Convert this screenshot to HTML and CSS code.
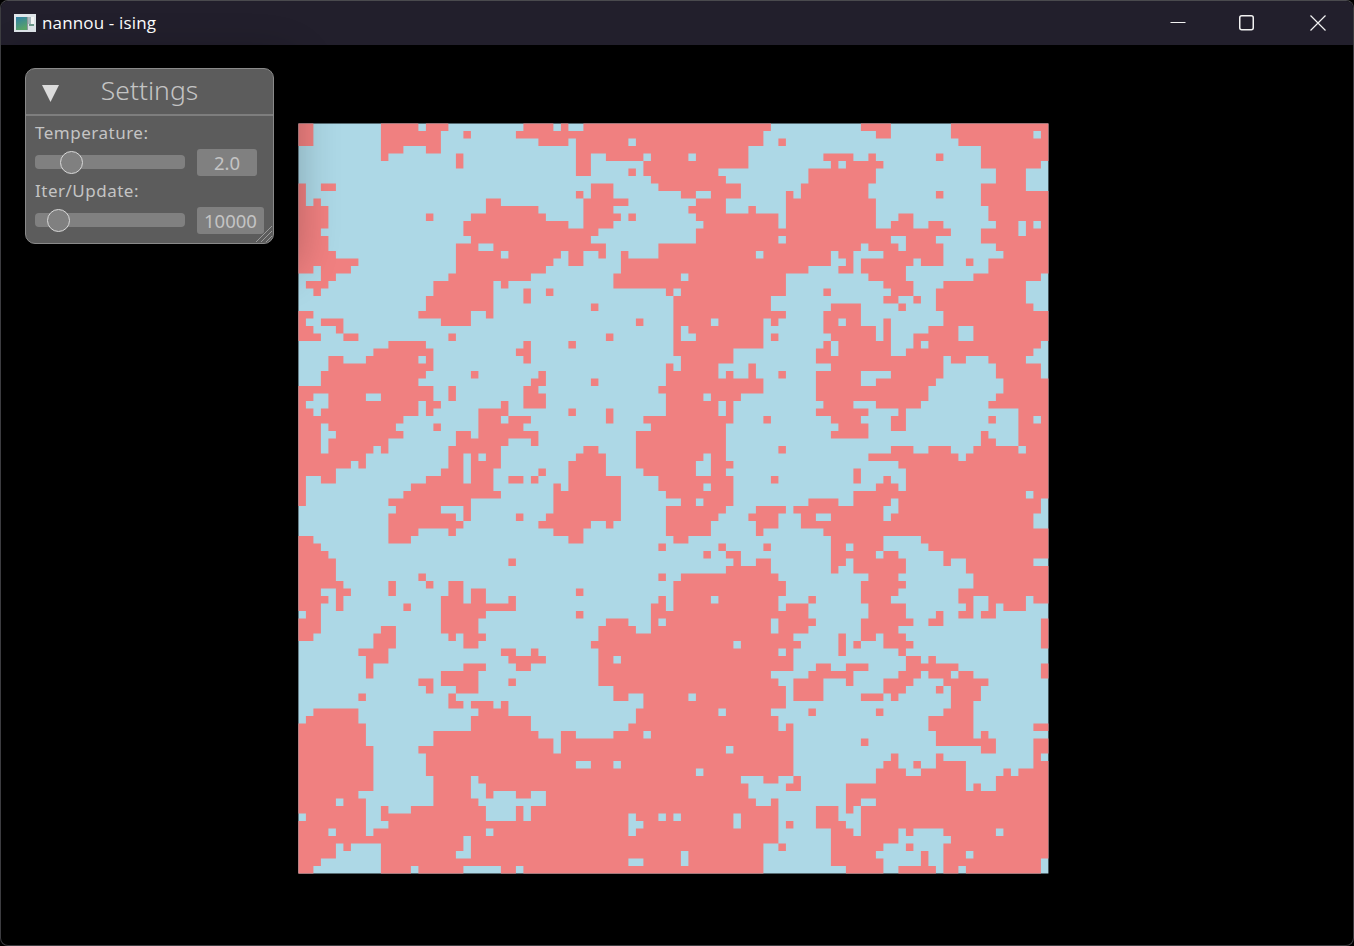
FILE: index.html
```html
<!DOCTYPE html>
<html lang="en">
  <head>
    <meta charset="UTF-8" />
    <title>nannou - ising</title>
    <link rel="stylesheet" href="styles.css">
  </head>
  <body>
    <div class="window">
      <header class="titlebar">
        <svg class="app-icon" width="22" height="18" viewBox="0 0 22 18">
          <defs>
            <linearGradient id="iconFill" x1="0" y1="0" x2="0.4" y2="1">
              <stop offset="0" stop-color="#2f7fa8" />
              <stop offset="1" stop-color="#5aa56a" />
            </linearGradient>
          </defs>
          <rect width="22" height="18" fill="#dfe6ea" />
          <rect x="2" y="3" width="11" height="13" fill="url(#iconFill)" />
          <rect x="13" y="3" width="1" height="13" fill="#8f9a9e" />
          <rect x="17" y="3" width="3" height="7" fill="#f4f6f6" />
          <rect x="14" y="3" width="3" height="7" fill="#a9b9bd" />
          <rect x="15" y="10" width="5" height="2" fill="#6d9a8a" />
        </svg>
        <span class="title">nannou - ising</span>
        <div class="controls">
          <button class="ctl">
            <svg width="16" height="16" viewBox="0 0 16 16"><path d="M0.5 7.5H15.5" /></svg>
          </button>
          <button class="ctl max">
            <svg width="16" height="16" viewBox="0 0 16 16"><rect x="0.75" y="0.75" width="13.5" height="14" rx="2" /></svg>
          </button>
          <button class="ctl">
            <svg width="16" height="16" viewBox="0 0 16 16"><path d="M0.5 0.5L15.5 15.5M15.5 0.5L0.5 15.5" /></svg>
          </button>
        </div>
      </header>

      <main class="content">
        <svg id="lattice" class="lattice" width="751" height="751" viewBox="0 0 751 751"></svg>

        <section class="panel">
          <div class="panel-head">
            <svg class="collapse" width="17" height="17" viewBox="0 0 17 17"><path d="M0 0H17L8.5 17Z" /></svg>
            <span class="panel-title">Settings</span>
          </div>
          <div class="panel-body">
            <div class="label">Temperature:</div>
            <div class="row">
              <div class="track"><span class="thumb" style="left: 24%"></span></div>
              <div class="value">2.0</div>
            </div>
            <div class="label">Iter/Update:</div>
            <div class="row">
              <div class="track"><span class="thumb" style="left: 15.5%"></span></div>
              <div class="value wide">10000</div>
            </div>
          </div>
          <svg class="grip" width="18" height="18" viewBox="0 0 18 18">
            <path d="M1 17L17 1M6 17L17 6M11 17L17 11" />
          </svg>
        </section>
      </main>
    </div>
    <script src="script.js"></script>
  </body>
</html>
```

FILE: styles.css
```css
* {
  box-sizing: border-box;
}
html,
body {
  margin: 0;
  height: 100%;
  background-color: #000000;
}
.window {
  height: 946px;
  display: flex;
  flex-direction: column;
  border: 1px solid #3c3c40;
  border-top-color: #4a4a4e;
  border-radius: 8px;
  overflow: hidden;
  background-color: #000000;
}
.titlebar {
  height: 44px;
  display: flex;
  align-items: center;
  background-color: #221f2c;
  color: #ffffff;
  padding-left: 13px;
}
.app-icon {
  margin-right: 6px;
  margin-top: -1px;
}
.title {
  font-family: "Open Sans", sans-serif;
  font-size: 17px;
  letter-spacing: 0.15px;
  margin-top: -2px;
}
.controls {
  margin-left: auto;
  display: flex;
}
.ctl {
  width: 70px;
  height: 44px;
  display: flex;
  align-items: center;
  justify-content: center;
  padding: 0;
  border: none;
  background: none;
}
.ctl svg {
  fill: none;
  stroke: #f2f2f2;
  stroke-width: 1.2;
}
.max svg {
  margin-right: 3px;
  stroke-width: 1.5;
}
.content {
  flex: 1;
  position: relative;
  padding: 78px 0 0 297px;
}
.lattice {
  display: block;
}
.panel {
  position: absolute;
  left: 24px;
  top: 23px;
  width: 249px;
  height: 176px;
  background-color: #5c5c5c;
  border: 1px solid #8a8a8a;
  border-radius: 10px;
  box-shadow: 4px 8px 40px 22px rgba(0, 0, 0, 0.24);
  font-family: "Noto Sans", sans-serif;
  color: #c4c4c4;
}
.panel-head {
  height: 47px;
  position: relative;
  display: flex;
  align-items: center;
  justify-content: center;
  border-bottom: 2px solid #7e7e7e;
}
.collapse {
  position: absolute;
  left: 16px;
  top: 16px;
  fill: #dcdcdc;
}
.panel-title {
  font-size: 26.5px;
  font-weight: 300;
  line-height: 44px;
  margin-top: -4px;
}
.panel-body {
  padding: 7px 9px 0 9px;
}
.label {
  font-size: 17px;
  letter-spacing: 0.5px;
  line-height: 20px;
  height: 20px;
}
.row {
  display: flex;
  align-items: center;
  gap: 12px;
  height: 38px;
}
.track {
  position: relative;
  width: 150px;
  height: 14px;
  border-radius: 4px;
  background-color: #808080;
}
.thumb {
  position: absolute;
  top: 50%;
  width: 23px;
  height: 23px;
  margin: -11.5px 0 0 -11.5px;
  border: 1.5px solid #d8d8d8;
  border-radius: 50%;
  background-color: #808080;
}
.value {
  width: 60px;
  height: 27px;
  border-radius: 3px;
  background-color: #808080;
  font-size: 18.5px;
  line-height: 27px;
  text-align: center;
}
.wide {
  width: 67px;
}
.grip {
  position: absolute;
  right: 0;
  bottom: 0;
  fill: none;
  stroke: #9a9a9a;
  stroke-width: 1;
}
```

FILE: script.js
```js
// red runs per row, "start-end" in lattice cells, the rest of the row is blue
const rows = [
  "0-2 11-16 17-20 30-34 35-36 38-63 75-79 87-100",
  "0-2 11-19 22-23 29-62 77-79 87-98 99-100",
  "0-2 11-19 32-36 37-44 45-62 64-65 88-100",
  "11-14 17-19 37-60 91-100",
  "11-12 21-22 37-39 41-46 47-52 53-60 70-74 76-77 85-86 91-100",
  "21-22 37-39 46-60 71-72 73-78 91-99",
  "37-39 44-45 46-56 68-77 93-97",
  "47-57 68-77 93-97",
  "0-1 3-5 39-42 48-59 67-76 91-97",
  "0-1 37-38 39-42 51-53 55-59 65-66 67-76 85-86 91-100",
  "0-1 2-3 25-27 38-44 53-57 65-77 91-100",
  "0-4 25-32 38-42 52-57 60-61 65-77 92-100",
  "0-4 17-18 23-33 38-43 44-45 53-64 65-77 80-82 92-100",
  "0-4 22-36 38-42 54-64 65-77 79-82 84-86 93-96 97-98 99-100",
  "0-3 22-40 53-87 91-96 97-100",
  "0-4 23-39 53-64 65-79 81-85 91-100",
  "0-4 21-24 26-41 48-75 76-80 81-86 93-100",
  "0-5 21-27 28-35 36-38 40-41 43-44 48-61 62-71 72-74 78-86 94-100",
  "0-8 21-34 36-38 43-71 73-74 75-82 83-86 89-90 92-100",
  "0-2 3-7 21-33 43-68 72-74 75-81 92-100",
  "3-5 20-31 42-51 52-65 76-81 90-99",
  "1-4 18-26 27-28 42-65 78-82 86-97",
  "2-3 18-26 30-31 33-34 49-50 51-65 70-71 79-82 85-97",
  "17-26 30-31 50-63 78-80 82-83 85-97",
  "17-26 39-40 50-63 71-75 80-81 85-98",
  "0-2 16-23 25-26 50-65 70-75 86-100",
  "0-1 3-6 19-23 45-46 50-55 56-62 63-64 70-72 73-75 78-79 86-100",
  "0-2 5-6 50-51 52-62 70-77 78-79 84-88 90-100",
  "0-3 6-8 20-21 41-42 50-51 53-62 63-64 71-77 78-79 82-88 90-100",
  "12-17 30-31 36-37 50-62 70-71 72-79 82-83 84-99",
  "10-18 29-31 50-58 69-71 72-79 81-98",
  "4-6 9-16 17-18 30-31 51-58 69-86 87-89 92-97",
  "4-18 49-50 51-56 60-61 71-86 93-99",
  "3-17 23-24 32-33 49-56 57-58 60-61 64-65 69-75 79-86 93-99",
  "3-16 31-33 39-40 49-62 69-75 77-85 94-100",
  "0-18 20-21 30-32 48-62 69-84 94-100",
  "0-2 4-9 11-18 20-21 30-33 49-54 55-59 69-84 93-100",
  "0-1 4-16 17-19 27-28 30-33 49-56 57-58 70-74 77-83 92-100",
  "0-2 3-16 17-18 24-28 36-37 41-42 49-56 57-58 69-76 80-81 96-100",
  "0-14 24-27 28-31 41-42 46-58 62-63 71-75 79-81 92-93 96-98 99-100",
  "0-3 4-13 18-19 24-30 47-57 72-76 79-81 96-100",
  "0-3 5-14 21-23 24-32 45-57 71-76 91-92 96-100",
  "0-3 4-12 21-28 31-32 45-57 91-93 96-100",
  "0-3 4-10 11-12 20-27 38-40 45-57 64-65 79-82 84-87 90-96 97-100",
  "0-9 20-22 23-24 25-27 37-41 45-54 55-57 76-88 89-100",
  "0-7 8-9 20-22 23-27 36-41 45-53 55-58 80-100",
  "0-5 19-22 23-26 32-33 36-41 46-53 55-57 74-75 81-100",
  "0-1 3-5 17-22 23-26 28-30 31-32 36-43 48-58 63-64 74-75 78-79 81-100",
  "0-1 15-26 34-35 36-43 48-54 55-58 77-80 81-100",
  "0-1 14-27 34-43 49-58 74-97 98-100",
  "0-1 12-23 34-43 51-53 54-58 68-72 74-79 80-99",
  "13-19 22-23 34-43 49-57 61-65 66-78 80-99",
  "12-21 22-23 29-30 33-43 49-56 60-64 67-69 71-78 79-98",
  "12-22 32-39 41-42 49-55 61-64 67-98",
  "12-16 20-21 34-38 49-55 61-62 70-100",
  "0-2 12-15 36-38 50-52 71-78 83-100",
  "0-3 48-49 56-57 62-63 71-73 74-78 84-100",
  "0-4 54-55 57-59 71-77 78-80 86-100",
  "0-5 28-29 58-59 61-63 71-73 74-81 86-87 89-98",
  "0-5 57-63 71-72 74-81 89-100",
  "0-5 16-17 48-49 51-64 76-80 90-100",
  "0-6 12-13 17-18 20-22 50-65 75-81 90-100",
  "0-3 5-7 12-13 20-22 23-25 37-38 50-65 75-80 88-100",
  "0-4 5-6 19-22 23-25 28-29 48-49 50-55 56-64 68-69 75-79 88-90 92-97 98-100",
  "0-3 5-6 14-15 19-29 47-49 50-64 65-68 76-81 89-90 92-93 94-97",
  "1-3 19-25 37-38 47-68 76-81 85-86 88-90 91-93",
  "0-3 19-24 41-44 47-48 49-63 64-69 75-82 84-86 99-100",
  "0-3 11-13 19-24 40-45 47-63 64-68 75-80 99-100",
  "0-2 10-13 20-21 22-25 40-66 72-73 75-77 78-81 99-100",
  "10-13 22-24 39-58 59-67 72-73 74-75 78-82 99-100",
  "8-12 27-29 31-32 40-64 65-66 72-73 80-81",
  "9-12 28-33 40-42 43-66 81-83 84-85",
  "9-10 22-25 29-31 40-66 69-71 73-76 81-88 99-100",
  "9-10 19-24 40-63 68-74 80-83 84-87 88-90 99-100",
  "16-18 19-24 28-29 40-64 66-70 73-74 78-82 86-92",
  "17-18 21-24 42-65 66-70 78-81 85-86 87-91",
  "8-9 20-21 42-44 46-52 53-65 66-70 75-78 79-80 87-91",
  "20-22 23-26 27-28 46-65 87-90",
  "2-8 24-28 45-56 57-63 68-69 77-78 86-90",
  "1-8 23-31 45-64 84-90",
  "0-9 23-31 44-64 65-66 84-90 98-100",
  "0-9 18-32 35-37 42-46 47-66 85-90 91-92",
  "0-9 18-34 35-66 75-76 85-93 98-100",
  "0-10 16-34 35-57 58-66 91-93 98-100",
  "0-10 17-66 79-80 85-86 98-99",
  "0-10 17-37 39-42 43-66 78-80 82-83 85-89 98-100",
  "0-10 17-53 54-66 77-81 83-89 94-95 96-100",
  "0-10 18-23 24-59 62-64 66-67 77-89 93-100",
  "0-10 18-23 25-60 65-67 73-89 90-91 93-100",
  "0-8 18-23 25-26 29-31 33-60 73-100",
  "0-5 6-9 18-24 33-61 63-64 73-75 77-100",
  "0-9 11-12 15-25 29-30 31-64 69-72 73-74 75-100",
  "1-9 11-25 29-30 31-44 45-48 49-50 51-58 59-64 69-72 75-100",
  "0-9 12-44 46-58 59-64 65-66 69-73 75-100",
  "0-4 5-9 10-25 26-44 45-64 71-74 75-80 81-82 86-93 94-100",
  "0-22 23-64 71-80 87-100",
  "0-5 6-7 11-22 23-62 64-65 71-78 81-82 86-100",
  "0-5 11-21 23-51 52-62 71-77 83-84 86-89 90-100",
  "0-3 11-44 46-51 52-62 71-78 83-84 86-99",
  "0-2 11-15 16-22 27-29 30-62 73-78 80-85 86-88 89-99",
];

const CELL = 7.5;
const LEFT = 0.4;
const TOP = 0.5;
const NS = "http://www.w3.org/2000/svg";
const lattice = document.getElementById("lattice");

function addPath(d, fill) {
  const path = document.createElementNS(NS, "path");
  path.setAttribute("d", d);
  path.setAttribute("fill", fill);
  lattice.appendChild(path);
}

let red = "";
rows.forEach((row, r) => {
  const y0 = TOP + r * CELL;
  const y1 = y0 + CELL;
  row.split(" ").forEach((run) => {
    const [a, b] = run.split("-").map(Number);
    const x0 = LEFT + a * CELL;
    const x1 = LEFT + b * CELL;
    red += `M${x0} ${y0}H${x1}V${y1}H${x0}Z`;
  });
});

addPath(`M${LEFT} ${TOP}H${LEFT + 750}V${TOP + 750}H${LEFT}Z`, "lightblue");
addPath(red, "lightcoral");
```
